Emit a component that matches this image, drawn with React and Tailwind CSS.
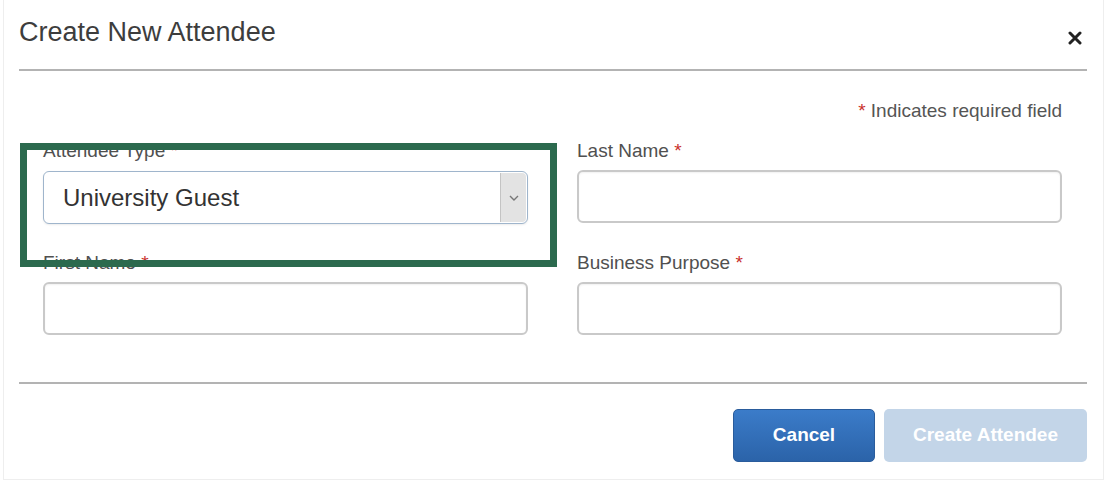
import React from 'react';

const font = { fontFamily: '"Liberation Sans", Arial, sans-serif' };

function Label({ children }) {
  return (
    <div className="text-[19px] leading-[22px] text-[#505050]">
      {children} <span className="text-[#c9302c]">*</span>
    </div>
  );
}

function TextInput() {
  return (
    <div className="mt-[8px] h-[53px] rounded-[6px] border-2 border-[#c9c9c9] bg-white shadow-[inset_0_1px_2px_rgba(0,0,0,0.06)]" />
  );
}

export default function App() {
  return (
    <div className="w-[1109px] h-[485px] bg-white" style={font}>
      <div className="relative ml-[3px] mr-[5px] h-[480px] border-l border-r border-b border-[#eeeeee]">
        {/* Header */}
        <div className="ml-[15px] mr-[16px] h-[71px] flex items-start justify-between border-b-2 border-[#b3b3b3]">
          <h2 className="pt-[19px] text-[27px] leading-[27px] text-[#3d3d3d] font-normal">
            Create New Attendee
          </h2>
          <svg className="mt-[31px] mr-[5px]" width="14" height="14" viewBox="0 0 14 14">
            <path d="M2 2 L12 12 M12 2 L2 12" stroke="#222" strokeWidth="3" strokeLinecap="round" />
          </svg>
        </div>

        {/* Body */}
        <div className="pl-[39px] pr-[41px] pt-[29px]">
          <div className="text-right text-[19px] leading-[22px] text-[#555]">
            <span className="text-[#c9302c]">*</span> Indicates required field
          </div>

          <div className="mt-[18px] grid grid-cols-2 gap-x-[49px]">
            <div>
              <Label>Attendee Type</Label>
              <div className="mt-[9px] h-[53px] flex items-stretch rounded-[6px] border border-[#9fb5cc] bg-white shadow-[0_1px_2px_rgba(0,0,0,0.08)] overflow-hidden">
                <div className="flex-1 flex items-center pl-[19px] text-[24px] text-[#333]">
                  University Guest
                </div>
                <div className="w-[26px] mr-[1px] my-[1px] flex items-center justify-center bg-[#e3e3e3] border-l border-[#c4c4c4] rounded-r-[4px]">
                  <svg width="10" height="6" viewBox="0 0 10 6">
                    <path d="M1 1 L5 5 L9 1" fill="none" stroke="#777" strokeWidth="1.4" />
                  </svg>
                </div>
              </div>
            </div>
            <div>
              <Label>Last Name</Label>
              <div className="mt-[1px]">
                <TextInput />
              </div>
            </div>

            <div className="mt-[28px]">
              <Label>First Name</Label>
              <TextInput />
            </div>
            <div className="mt-[28px]">
              <Label>Business Purpose</Label>
              <TextInput />
            </div>
          </div>
        </div>

        {/* Footer */}
        <div className="ml-[15px] mr-[16px] mt-[47px] border-t-2 border-[#b3b3b3]" />
        <div className="pt-[25px] pr-[16px] flex justify-end gap-[9px]">
          <button className="w-[142px] h-[53px] rounded-[5px] border border-[#2a5c9c] bg-gradient-to-b from-[#3b7cc9] to-[#2b63a9] text-white text-[19px] font-bold">
            Cancel
          </button>
          <button className="w-[203px] h-[53px] rounded-[5px] bg-[#c3d5e8] text-white text-[19px] font-bold">
            Create Attendee
          </button>
        </div>

        {/* Highlight overlay */}
        <div className="absolute left-[16px] top-[143px] w-[537px] h-[124px] border-[7px] border-[#2c6a4e]" />
      </div>
    </div>
  );
}
